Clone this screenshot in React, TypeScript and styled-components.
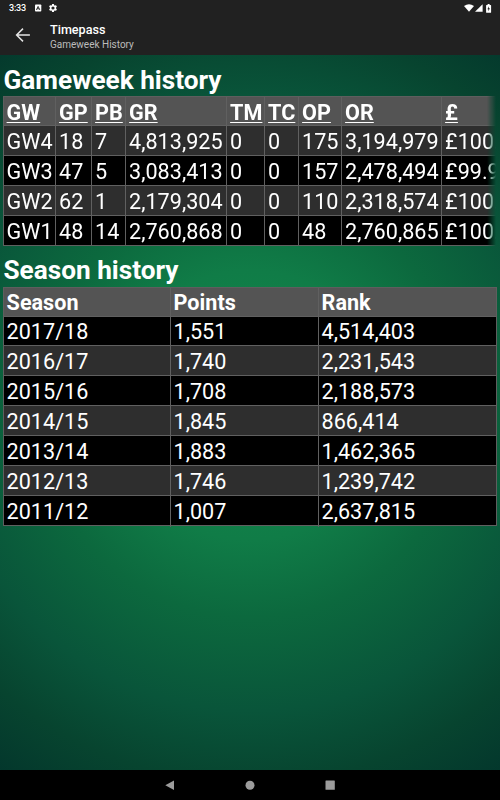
import React from "react";
import styled, { createGlobalStyle } from "styled-components";

const GlobalStyle = createGlobalStyle`
  * { box-sizing: border-box; }
  body { margin: 0; background: #000; }
`;

const Screen = styled.div`
  width: 500px;
  height: 800px;
  display: flex;
  flex-direction: column;
  overflow: hidden;
  font-family: Roboto, sans-serif;
  color: #fff;
`;

const StatusBar = styled.div`
  height: 16px;
  flex: none;
  display: flex;
  align-items: center;
  background: #212121;
  padding: 0 7px 0 9px;
`;

const Clock = styled.span`
  font-size: 9px;
  font-weight: 500;
  line-height: 16px;
  letter-spacing: -0.2px;
  width: 25px;
`;

const StatusIcons = styled.div<{ $end?: boolean }>`
  display: flex;
  align-items: center;
  gap: ${(p) => (p.$end ? 1 : 6)}px;
  margin-left: ${(p) => (p.$end ? "auto" : "0")};
  svg { display: block; }
`;

const AppBar = styled.header`
  height: 39px;
  flex: none;
  display: flex;
  align-items: center;
  background: #212121;
  padding-left: 13px;
`;

const BackButton = styled.button`
  width: 37px;
  height: 39px;
  padding: 0 0 1px;
  border: 0;
  background: none;
  svg { display: block; }
`;

const Titles = styled.div`
  display: flex;
  flex-direction: column;
  padding-top: 2px;
`;

const Title = styled.div`
  font-size: 12.6px;
  font-weight: 500;
  line-height: 15px;
`;

const Subtitle = styled.div`
  font-size: 10px;
  line-height: 15px;
  color: #bcbcbc;
`;

const Content = styled.main`
  flex: 1;
  padding: 10px 3px 0;
  background: radial-gradient(
    circle 450px at 250px 350px,
    #128a4d 0%,
    #107c47 30%,
    #0c693e 47%,
    #09553a 68%,
    #07442f 84%,
    #03362c 100%
  );
`;

const Heading = styled.h1<{ $second?: boolean }>`
  margin: ${(p) => (p.$second ? "9px 0 0 0.5px" : "0 0 0 0.5px")};
  height: ${(p) => (p.$second ? 32 : 31)}px;
  font-size: 26.2px;
  font-weight: 700;
  line-height: 30px;
`;

const ScrollArea = styled.div`
  overflow: hidden;
  mask-image: linear-gradient(to right, #000 484px, transparent 493px);
`;

const Table = styled.div<{ $width: number }>`
  width: ${(p) => p.$width}px;
  border: 1px solid #5e5e5e;
  border-bottom: 0;
`;

const Row = styled.div<{ $cols: string; $tone: "head" | "grey" | "black"; $h: number }>`
  display: grid;
  grid-template-columns: ${(p) => p.$cols};
  height: ${(p) => p.$h}px;
  border-bottom: 1px solid #606060;
  background: ${(p) => ({ head: "#545454", grey: "#2e2e2e", black: "#000" })[p.$tone]};
  font-weight: ${(p) => (p.$tone === "head" ? 700 : 400)};
`;

const Cell = styled.div<{ $underline?: boolean; $line?: number; $pad?: number }>`
  padding-left: ${(p) => p.$pad ?? 2.6}px;
  border-right: 1px solid #606060;
  font-size: 21.6px;
  line-height: ${(p) => p.$line ?? 31}px;
  white-space: nowrap;
  &:last-child { border-right: 0; }
  text-decoration: ${(p) => (p.$underline ? "underline" : "none")};
  text-decoration-thickness: 1.3px;
  text-decoration-skip-ink: none;
  text-underline-offset: 1.5px;
`;

const NavBar = styled.nav`
  height: 30px;
  flex: none;
  display: flex;
  align-items: center;
  justify-content: center;
  gap: 70px;
  background: #000;
  svg { display: block; }
`;

const GW_COLS = "52px 36px 34px 101px 38px 34px 43px 100px 1fr";
const GW_HEAD = ["GW", "GP", "PB", "GR", "TM", "TC", "OP", "OR", "£"];
const GW_ROWS = [
  ["GW4", "18", "7", "4,813,925", "0", "0", "175", "3,194,979", "£100.0"],
  ["GW3", "47", "5", "3,083,413", "0", "0", "157", "2,478,494", "£99.9"],
  ["GW2", "62", "1", "2,179,304", "0", "0", "110", "2,318,574", "£100.0"],
  ["GW1", "48", "14", "2,760,868", "0", "0", "48", "2,760,865", "£100.0"],
];

const SEASON_COLS = "167px 148px 1fr";
const SEASON_HEAD = ["Season", "Points", "Rank"];
const SEASON_ROWS = [
  ["2017/18", "1,551", "4,514,403"],
  ["2016/17", "1,740", "2,231,543"],
  ["2015/16", "1,708", "2,188,573"],
  ["2014/15", "1,845", "866,414"],
  ["2013/14", "1,883", "1,462,365"],
  ["2012/13", "1,746", "1,239,742"],
  ["2011/12", "1,007", "2,637,815"],
];

export default function App() {
  return (
    <>
      <GlobalStyle />
      <Screen>
        <StatusBar>
          <Clock>3:33</Clock>
          <StatusIcons>
            <svg width="8" height="8" viewBox="0 0 8 8">
              <rect x="1" y="0.5" width="6.3" height="7" rx="0.8" fill="#fff" />
              <path d="M2.4 5.9 4.1 2.4 5.8 5.9M3 4.8h2.2" fill="none" stroke="#212121" strokeWidth="0.9" />
            </svg>
            <svg width="10" height="10" viewBox="0 0 24 24" fill="#fff">
              <path d="M19.14 12.94c.04-.3.06-.61.06-.94s-.02-.64-.07-.94l2.03-1.58a.5.5 0 0 0 .12-.61l-1.92-3.32a.49.49 0 0 0-.59-.22l-2.39.96a7 7 0 0 0-1.62-.94l-.36-2.54a.48.48 0 0 0-.48-.41h-3.84a.47.47 0 0 0-.47.41l-.36 2.54c-.59.24-1.13.57-1.62.94l-2.39-.96a.48.48 0 0 0-.59.22L2.74 8.87a.47.47 0 0 0 .12.61l2.03 1.58a6.4 6.4 0 0 0-.02 1.88l-2.03 1.58a.5.5 0 0 0-.12.61l1.92 3.32c.12.22.37.29.59.22l2.39-.96c.5.38 1.03.7 1.62.94l.36 2.54c.05.24.24.41.48.41h3.84c.24 0 .44-.17.47-.41l.36-2.54a7 7 0 0 0 1.62-.94l2.39.96c.22.08.47 0 .59-.22l1.92-3.32a.47.47 0 0 0-.12-.61zM12 15.8a3.8 3.8 0 1 1 0-7.6 3.8 3.8 0 0 1 0 7.6z" />
            </svg>
          </StatusIcons>
          <StatusIcons $end>
            <svg width="10" height="8" viewBox="0 0 10 8">
              <path d="M0 2.1Q5-1.5 10 2.1L5 7.8Z" fill="#fff" />
            </svg>
            <svg width="8" height="8" viewBox="0 0 8 8">
              <path d="M7.6.2V7.8H0Z" fill="#fff" />
            </svg>
            <svg width="9" height="9" viewBox="0 0 9 9">
              <path d="M2.6.9H3.6V0h2v.9h1Q7.1.9 7.1 1.5V8.2Q7.1 8.8 6.6 8.8H2.6Q2.1 8.8 2.1 8.2V1.5Q2.1.9 2.6.9Z" fill="#fff" />
              <path d="M4.9 2.2 3.4 5.2H4.4V7.3L5.9 4.3H4.9Z" fill="#212121" />
            </svg>
          </StatusIcons>
        </StatusBar>
        <AppBar>
          <BackButton aria-label="Back">
            <svg width="20" height="20" viewBox="0 0 20 20" fill="none" stroke="#e4e4e4" strokeWidth="1.5">
              <path d="M16.9 10H4M10 3.6 3.6 10l6.4 6.4" />
            </svg>
          </BackButton>
          <Titles>
            <Title>Timepass</Title>
            <Subtitle>Gameweek History</Subtitle>
          </Titles>
        </AppBar>
        <Content>
          <Heading>Gameweek history</Heading>
          <ScrollArea>
            <Table $width={540}>
              <Row $cols={GW_COLS} $tone="head" $h={29}>
                {GW_HEAD.map((t, j) => (
                  <Cell key={t} $underline $pad={j ? 3.1 : 2.6}>{t}</Cell>
                ))}
              </Row>
              {GW_ROWS.map((r, i) => (
                <Row key={r[0]} $cols={GW_COLS} $tone={i % 2 ? "black" : "grey"} $h={30}>
                  {r.map((t, j) => (
                    <Cell key={j} $pad={j ? 3.1 : 2.6}>{t}</Cell>
                  ))}
                </Row>
              ))}
            </Table>
          </ScrollArea>
          <Heading $second as="h2">Season history</Heading>
          <Table $width={494}>
            <Row $cols={SEASON_COLS} $tone="head" $h={29}>
              {SEASON_HEAD.map((t) => (
                <Cell key={t} $line={29}>{t}</Cell>
              ))}
            </Row>
            {SEASON_ROWS.map((r, i) => (
              <Row key={r[0]} $cols={SEASON_COLS} $tone={i % 2 ? "grey" : "black"} $h={i ? 30 : 29}>
                {r.map((t, j) => (
                  <Cell key={j} $line={i ? 31 : 30}>{t}</Cell>
                ))}
              </Row>
            ))}
          </Table>
        </Content>
        <NavBar>
          <svg width="10" height="10" viewBox="0 0 10 10"><path d="M9 .5V10L.3 5.2Z" fill="#9c9c9c" /></svg>
          <svg width="10" height="10" viewBox="0 0 10 10"><circle cx="5" cy="5.2" r="4.5" fill="#9c9c9c" /></svg>
          <svg width="10" height="10" viewBox="0 0 10 10"><rect x=".5" y=".5" width="9.3" height="9.3" rx=".4" fill="#9c9c9c" /></svg>
        </NavBar>
      </Screen>
    </>
  );
}
